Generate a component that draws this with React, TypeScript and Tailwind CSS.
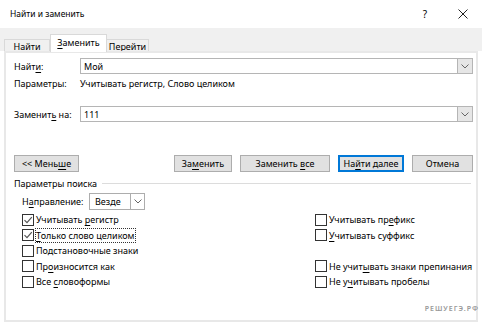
import React from "react"

const font = { fontFamily: '"Noto Sans", "Open Sans", sans-serif' }

const U = ({ children }: { children: React.ReactNode }) => <span className="underline underline-offset-[1.5px]">{children}</span>

const Check = ({ checked, children }: { checked?: boolean; children: React.ReactNode }) => (
  <div className="flex h-[15.5px] items-center">
    <span className="flex h-[12px] w-[12px] shrink-0 items-center justify-center border border-[#333] bg-white">
      {checked && (
        <svg width="10" height="10" viewBox="0 0 10 10">
          <path d="M1.5 5.2 L4 7.7 L8.8 2.2" fill="none" stroke="#555" strokeWidth="1.2" />
        </svg>
      )}
    </span>
    <span className="ml-[2px] leading-none">{children}</span>
  </div>
)

const Combo = ({ value }: { value: string }) => (
  <div className="flex h-[16px] flex-1 items-center border border-[#b5b5b5] bg-white">
    <span className="flex-1 pl-[3px] leading-none">{value}</span>
    <span className="flex h-full w-[15px] items-center justify-center border-l border-[#b5b5b5] bg-[#e6e6e6]">
      <svg width="8" height="5" viewBox="0 0 8 5">
        <path d="M0.5 0.5 L4 4 L7.5 0.5" fill="none" stroke="#666" strokeWidth="1" />
      </svg>
    </span>
  </div>
)

const Btn = ({ children, primary, className }: { children: React.ReactNode; primary?: boolean; className: string }) => (
  <div
    className={
      "flex h-[17px] items-center justify-center bg-[#e1e1e1] leading-none " +
      (primary ? "border-2 border-[#0078d7] " : "border border-[#adadad] ") +
      className
    }
  >
    <span>{children}</span>
  </div>
)

export default function App() {
  return (
    <div className="flex h-[330px] w-[482px] flex-col overflow-hidden whitespace-nowrap bg-white text-[9px] text-[#000]" style={font}>
      {/* title bar */}
      <div className="flex h-[28px] items-center pl-[10px]">
        <span className="flex-1 text-[8.5px] leading-none">Найти и заменить</span>
        <span className="mr-[31px] text-[10px] leading-none">?</span>
        <svg width="10" height="10" viewBox="0 0 10 10" className="mr-[14px]">
          <path d="M0.5 0.5 L9.5 9.5 M9.5 0.5 L0.5 9.5" stroke="#222" strokeWidth="1" />
        </svg>
      </div>

      {/* tabs */}
      <div className="flex h-[23px] items-end bg-[#f0f0f0] pl-[4px]">
        <div className="mb-[-1px] flex h-[13px] w-[46px] items-center justify-center border border-b-0 border-[#d9d9d9] leading-none">
          <span>
            <U>Н</U>айти
          </span>
        </div>
        <div className="relative z-10 mb-[-1px] flex h-[18px] w-[57px] items-center justify-center border border-b-0 border-[#d9d9d9] bg-white pb-[2px] leading-none">
          <span>
            <U>З</U>аменить
          </span>
        </div>
        <div className="mb-[-1px] flex h-[13px] w-[42px] items-center justify-center border border-b-0 border-l-0 border-[#d9d9d9] leading-none">
          <span>
            <U>П</U>ерейти
          </span>
        </div>
      </div>

      {/* panel */}
      <div className="mx-[4px] flex h-[271px] flex-col border-2 border-[#e8e8e8] pl-[8px] pr-[3px]">
        <div className="mt-[5px] flex items-center">
          <span className="w-[66px] leading-none">
            Найт<U>и</U>:
          </span>
          <Combo value="Мой" />
        </div>
        <div className="mt-[2px] flex h-[14px] items-center">
          <span className="w-[66px] leading-none">Параметры:</span>
          <span className="leading-none">Учитывать регистр, Слово целиком</span>
        </div>
        <div className="mt-[16px] flex items-center">
          <span className="w-[66px] leading-none">
            Заменит<U>ь</U> на:
          </span>
          <Combo value="111" />
        </div>

        <div className="mt-[33px] flex items-center">
          <Btn className="w-[65px]">
            &lt;&lt; Мень<U>ш</U>е
          </Btn>
          <div className="flex-1" />
          <Btn className="w-[58px]">
            За<U>м</U>енить
          </Btn>
          <Btn className="ml-[8px] w-[90px]">
            Заменить <U>в</U>се
          </Btn>
          <Btn primary className="ml-[8px] w-[66px]">
            На<U>й</U>ти далее
          </Btn>
          <Btn className="ml-[8px] w-[61px]">Отмена</Btn>
        </div>

        <div className="mt-[4px] flex h-[14px] items-center">
          <span className="leading-none">Параметры поиска</span>
          <span className="ml-[5px] mr-[2px] h-px flex-1 bg-[#dcdcdc]" />
        </div>

        <div className="mt-[3px] flex items-center pl-[8px]">
          <span className="w-[67px] leading-none">
            Н<U>а</U>правление:
          </span>
          <div className="flex h-[17px] w-[56px] items-center border border-[#adadad] bg-white">
            <span className="flex-1 pl-[5px] leading-none">Везде</span>
            <span className="flex h-full w-[14px] items-center justify-center border-l border-[#adadad]">
              <svg width="8" height="5" viewBox="0 0 8 5">
                <path d="M0.5 0.5 L4 4 L7.5 0.5" fill="none" stroke="#666" strokeWidth="1" />
              </svg>
            </span>
          </div>
        </div>

        <div className="mt-[2px] grid grid-cols-[293px_1fr] pl-[8px]">
          <div className="flex flex-col">
            <Check checked>
              Учитывать <U>р</U>егистр
            </Check>
            <Check checked>
              <span className="outline outline-1 outline-dotted outline-[#333]">
                <U>Т</U>олько слово целиком
              </span>
            </Check>
            <Check>Подстановочные знаки</Check>
            <Check>
              Пр<U>о</U>износится как
            </Check>
            <Check>
              Все <U>с</U>ловоформы
            </Check>
          </div>
          <div className="flex flex-col">
            <Check>
              Учитывать пр<U>е</U>фикс
            </Check>
            <Check>
              <U>У</U>читывать суффикс
            </Check>
            <div className="h-[15.5px]" />
            <Check>
              Не учит<U>ы</U>вать знаки препинания
            </Check>
            <Check>
              Не у<U>ч</U>итывать пробелы
            </Check>
          </div>
        </div>

        <div className="mt-auto mb-[8px] flex justify-end">
          <span className="mr-[-6px] text-[7px] font-semibold leading-none tracking-[1px] text-[#999]">РЕШУЕГЭ.РФ</span>
        </div>
      </div>
    </div>
  )
}
